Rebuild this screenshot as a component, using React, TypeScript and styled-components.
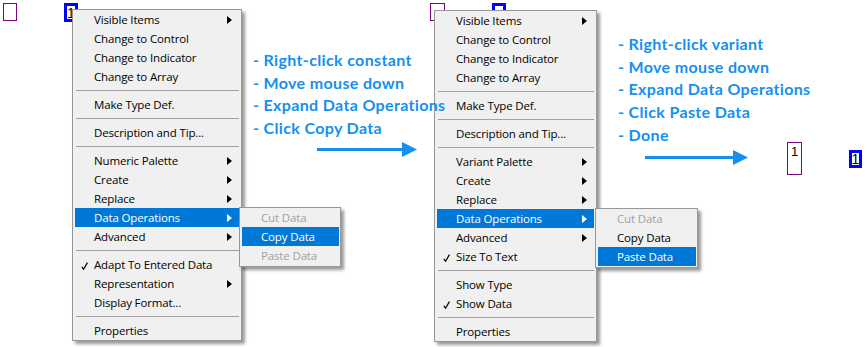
import React from 'react';
import styled, { createGlobalStyle } from 'styled-components';

const GlobalStyle = createGlobalStyle`
  html, body { margin: 0; padding: 0; background: #ffffff; }
  body { width: 867px; height: 347px; overflow: hidden; }
`;

const Stage = styled.div`
  display: flex;
  align-items: flex-start;
  width: 867px;
  height: 347px;
  overflow: hidden;
  font-family: "Open Sans", "Noto Sans", sans-serif;
`;

const Scene = styled.div<{ $w: number; $pl: number; $pt: number }>`
  position: relative;
  flex: none;
  box-sizing: border-box;
  width: ${(p) => p.$w}px;
  padding: ${(p) => p.$pt}px 0 0 ${(p) => p.$pl}px;
`;

const CanvasTerminal = styled.div<{ $x: number; $y: number; $w: number; $h: number; $kind: 'variant' | 'constant' }>`
  position: absolute;
  left: ${(p) => p.$x}px;
  top: ${(p) => p.$y}px;
  width: ${(p) => p.$w}px;
  height: ${(p) => p.$h}px;
  box-sizing: border-box;
  border: ${(p) => (p.$kind === 'variant' ? '1px solid #800080' : '3px solid #0000ff')};
  display: flex;
  justify-content: center;
  align-items: center;
  font-family: "Liberation Sans", Arial, sans-serif;
  font-size: 14px;
  line-height: 1;
  color: #000;
`;

const Menu = styled.div<{ $w: number }>`
  position: relative;
  z-index: 1;
  width: ${(p) => p.$w}px;
  box-sizing: border-box;
  background: #f0f0f0;
  border: 1px solid #979797;
  box-shadow: 3px 3px 3px rgba(0, 0, 0, 0.4);
  padding: 0 2px;
  font-size: 11.5px;
  letter-spacing: -0.15px;
  color: #000;
`;

const SubMenu = styled(Menu)<{ $dx: number }>`
  position: absolute;
  z-index: 3;
  left: calc(100% + ${(p) => p.$dx}px);
  top: -1px;
  padding: 0 1px 1px 2px;
`;

const Item = styled.div<{ $active?: boolean; $disabled?: boolean }>`
  position: relative;
  height: 19px;
  display: flex;
  align-items: center;
  padding-left: 19px;
  white-space: nowrap;
  background: ${(p) => (p.$active ? '#0078d7' : 'transparent')};
  color: ${(p) => (p.$active ? '#ffffff' : p.$disabled ? '#a0a0a0' : '#000000')};
`;

const Separator = styled.div`
  position: relative;
  height: 9px;
  &::after {
    content: '';
    position: absolute;
    left: 1px;
    right: 0;
    top: 4px;
    height: 1px;
    background: #a0a0a0;
  }
`;

const Check = styled.svg`
  position: absolute;
  left: 6px;
  top: 7px;
`;

const SubArrow = styled.svg`
  position: absolute;
  right: 7px;
  top: 6px;
`;

const Notes = styled.div<{ $w: number; $pl: number; $pt: number }>`
  position: relative;
  z-index: 2;
  flex: none;
  box-sizing: border-box;
  width: ${(p) => p.$w}px;
  padding: ${(p) => p.$pt}px 0 0 ${(p) => p.$pl}px;
  font-family: Lato, "Open Sans", sans-serif;
  font-weight: 700;
  font-size: 16px;
  letter-spacing: 0.35px;
  line-height: 22.7px;
  color: #1590f0;
  white-space: nowrap;
`;

const Step = styled.div``;

const FlowArrow = styled.svg<{ $ml: number; $mt: number }>`
  display: block;
  margin: ${(p) => p.$mt}px 0 0 ${(p) => p.$ml}px;
`;

const Result = styled.div`
  flex: none;
  display: flex;
  align-items: flex-start;
  padding: 142px 0 0 7px;
`;

const VariantIndicator = styled.div`
  width: 15px;
  height: 33px;
  box-sizing: border-box;
  border: 1px solid #800080;
  text-align: center;
  padding-top: 2px;
  font-family: "Liberation Sans", Arial, sans-serif;
  font-size: 13px;
  line-height: 14px;
  color: #000;
`;

const ConstantBox = styled.div`
  width: 13px;
  height: 18px;
  box-sizing: border-box;
  margin: 8px 0 0 47px;
  border: 3px solid #0000ff;
  display: flex;
  justify-content: center;
  align-items: center;
  font-family: "Liberation Sans", Arial, sans-serif;
  font-size: 14px;
  line-height: 1;
  color: #000;
`;

type Entry =
  | 'sep'
  | {
      t: string;
      sub?: boolean;
      check?: boolean;
      active?: boolean;
      disabled?: boolean;
      children?: Entry[];
    };

const CheckMark = () => (
  <Check width="7" height="8" viewBox="0 0 7 8">
    <path d="M0.8 4.8 L2.6 7.2 L6.4 0.6" fill="none" stroke="#000" strokeWidth="1.2" />
  </Check>
);

const Arrowhead = ({ white }: { white?: boolean }) => (
  <SubArrow width="5" height="8" viewBox="0 0 5 8">
    <polygon points="0,0 5,4 0,8" fill={white ? '#fff' : '#000'} />
  </SubArrow>
);

const MenuList = ({ entries, width, subWidth, subDx }: { entries: Entry[]; width: number; subWidth?: number; subDx?: number }) => (
  <Menu $w={width}>
    {entries.map((e, i) =>
      e === 'sep' ? (
        <Separator key={i} />
      ) : (
        <Item key={i} $active={e.active} $disabled={e.disabled}>
          {e.check && <CheckMark />}
          {e.t}
          {e.sub && <Arrowhead white={e.active} />}
          {e.children && (
            <SubMenu $w={subWidth || 102} $dx={subDx || 0}>
              {e.children.map((c, j) =>
                c === 'sep' ? (
                  <Separator key={j} />
                ) : (
                  <Item key={j} $active={c.active} $disabled={c.disabled}>
                    {c.t}
                  </Item>
                )
              )}
            </SubMenu>
          )}
        </Item>
      )
    )}
  </Menu>
);

const constantMenu: Entry[] = [
  { t: 'Visible Items', sub: true },
  { t: 'Change to Control' },
  { t: 'Change to Indicator' },
  { t: 'Change to Array' },
  'sep',
  { t: 'Make Type Def.' },
  'sep',
  { t: 'Description and Tip...' },
  'sep',
  { t: 'Numeric Palette', sub: true },
  { t: 'Create', sub: true },
  { t: 'Replace', sub: true },
  {
    t: 'Data Operations',
    sub: true,
    active: true,
    children: [
      { t: 'Cut Data', disabled: true },
      { t: 'Copy Data', active: true },
      { t: 'Paste Data', disabled: true },
    ],
  },
  { t: 'Advanced', sub: true },
  'sep',
  { t: 'Adapt To Entered Data', check: true },
  { t: 'Representation', sub: true },
  { t: 'Display Format...' },
  'sep',
  { t: 'Properties' },
];

const variantMenu: Entry[] = [
  { t: 'Visible Items', sub: true },
  { t: 'Change to Control' },
  { t: 'Change to Indicator' },
  { t: 'Change to Array' },
  'sep',
  { t: 'Make Type Def.' },
  'sep',
  { t: 'Description and Tip...' },
  'sep',
  { t: 'Variant Palette', sub: true },
  { t: 'Create', sub: true },
  { t: 'Replace', sub: true },
  {
    t: 'Data Operations',
    sub: true,
    active: true,
    children: [
      { t: 'Cut Data', disabled: true },
      { t: 'Copy Data' },
      { t: 'Paste Data', active: true },
    ],
  },
  { t: 'Advanced', sub: true },
  { t: 'Size To Text', check: true },
  'sep',
  { t: 'Show Type' },
  { t: 'Show Data', check: true },
  'sep',
  { t: 'Properties' },
];

const Arrow = ({ w, ml, mt }: { w: number; ml: number; mt: number }) => (
  <FlowArrow $ml={ml} $mt={mt} width={w} height="15" viewBox={`0 0 ${w} 15`}>
    <rect x="0" y="6" width={w - 14} height="3" fill="#1590f0" />
    <polygon points={`${w - 15},0 ${w},7.5 ${w - 15},15`} fill="#1590f0" />
  </FlowArrow>
);

export default function App() {
  return (
    <>
      <GlobalStyle />
      <Stage>
        <Scene $w={250} $pl={72} $pt={9}>
          <CanvasTerminal $kind="variant" $x={3} $y={3} $w={14} $h={18} />
          <CanvasTerminal $kind="constant" $x={64} $y={3} $w={14} $h={19}>1</CanvasTerminal>
          <MenuList entries={constantMenu} width={170} subWidth={102} subDx={0} />
        </Scene>
        <Notes $w={170} $pl={3} $pt={49}>
          <Step>- Right-click constant</Step>
          <Step>- Move mouse down</Step>
          <Step>- Expand Data Operations</Step>
          <Step>- Click Copy Data</Step>
          <Arrow w={100} ml={64} mt={2} />
        </Notes>
        <Scene $w={190} $pl={14} $pt={10}>
          <CanvasTerminal $kind="variant" $x={10} $y={3} $w={15} $h={18} />
          <CanvasTerminal $kind="constant" $x={72} $y={3} $w={14} $h={19} />
          <MenuList entries={variantMenu} width={163} subWidth={103} subDx={1} />
        </Scene>
        <Notes $w={170} $pl={8} $pt={33}>
          <Step>- Right-click variant</Step>
          <Step>- Move mouse down</Step>
          <Step>- Expand Data Operations</Step>
          <Step>- Click Paste Data</Step>
          <Step>- Done</Step>
          <Arrow w={103} ml={27} mt={3} />
        </Notes>
        <Result>
          <VariantIndicator>1</VariantIndicator>
          <ConstantBox>1</ConstantBox>
        </Result>
      </Stage>
    </>
  );
}
